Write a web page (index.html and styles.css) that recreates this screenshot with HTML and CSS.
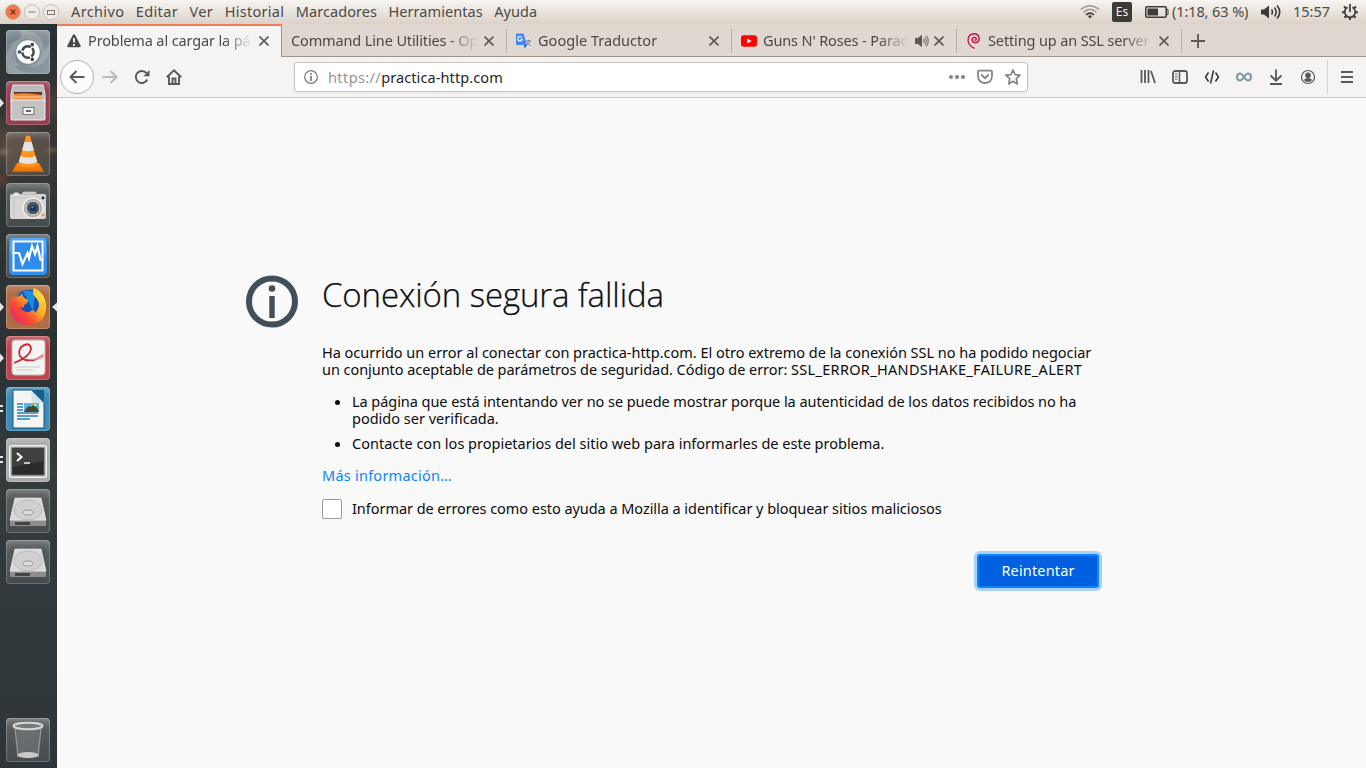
FILE: index.html
```html
<!DOCTYPE html>
<html lang="es">
<head>
<meta charset="utf-8">
<title>Problema al cargar la página</title>
<link rel="stylesheet" href="styles.css">
</head>
<body>
<div class="desktop">
  <header class="panel">
    <div class="window-buttons">
      <svg width="54" height="18" viewBox="0 0 54 18">
        <circle cx="8" cy="8" r="7.4" fill="#f0774a" stroke="#d9a58e"/>
        <path d="M5.7 5.7l4.6 4.6M10.3 5.7l-4.6 4.6" stroke="#5b3020" stroke-width="1.2"/>
        <circle cx="27" cy="8" r="7.6" fill="#efebe7" stroke="#c9c1b9"/>
        <path d="M23.500 8h7" stroke="#7d766f"/>
        <circle cx="46" cy="8" r="7.6" fill="#efebe7" stroke="#c9c1b9"/>
        <rect x="42.500" y="6.500" width="7" height="4" fill="none" stroke="#7d766f"/>
      </svg>
    </div>
    <nav class="menu">
      <span class="m1">Archivo</span><span class="m1">Editar</span><span class="m1">Ver</span><span class="m4">Historial</span><span class="m5">Marcadores</span><span class="m5">Herramientas</span><span class="m5">Ayuda</span>
    </nav>
    <div class="indicators">
      <svg class="i-wifi" width="20" height="16" viewBox="0 0 20 16" fill="none" stroke-width="1.6">
        <path d="M.7 5.5Q10-2 19.3 5.5" stroke="#a39e98"/>
        <path d="M3.500 8.300Q10 2.600 16.500 8.300" stroke="#a39e98"/>
        <path d="M6 11Q10 7.300 14 11" stroke="#3c3b37"/>
        <path d="M8 12.200Q10 10.500 12 12.200L10 14.500Z" fill="#3c3b37" stroke="none"/>
      </svg>
      <span class="i-lang">Es</span>
      <svg class="i-battery" width="24" height="12" viewBox="0 0 24 12">
        <rect x=".8" y=".8" width="20.4" height="10.4" rx="1.2" fill="none" stroke="#3c3b37" stroke-width="1.5"/>
        <rect x="2.5" y="2.5" width="10.5" height="7" fill="#3c3b37"/>
        <path d="M21.5 3.5h1.5v5h-1.5" fill="none" stroke="#3c3b37"/>
      </svg>
      <span class="i-charge">(1:18, 63 %)</span>
      <svg class="i-volume" width="20" height="16" viewBox="0 0 20 16" fill="none" stroke="#3c3b37" stroke-width="1.6">
        <path d="M0 5.500h3l5-4v13l-5-4H0z" fill="#3c3b37" stroke="none"/>
        <path d="M10.500 5.500q2 2.500 0 5M13.500 3.500q3.500 4.500 0 9M16 1.500q5.500 6.500 0 13"/>
      </svg>
      <span class="i-clock">15:57</span>
      <svg class="i-power" width="16" height="16" viewBox="0 0 16 16" fill="none" stroke="#3c3b37" stroke-width="1.7">
        <path d="M5.600 3.300A5.300 5.300 0 1 0 10.400 3.300M8 0v8"/>
        <path d="M3.800 4.200L2 2.400M12.200 4.200L14 2.400M2.700 8.200H0M13.300 8.200H16M4.200 12L2.400 13.800M11.800 12l1.800 1.800M8 13.500V16" stroke-width="2"/>
      </svg>
    </div>
  </header>

  <div class="workspace">
    <aside class="launcher">
      <div class="tile t-dash"><svg viewBox="0 0 44 44">
        <path d="M0 30Q3 5 28 7Q14 6 9 22Q8 32 15 37Q3 36 0 30M15 0Q42 2 36 24Q33 8 15 9M44 14Q43 42 16 36Q33 38 36 22M3 44Q-1 35 4 27Q8 43 27 43" fill="#fff" opacity=".17"/>
        <circle cx="22" cy="22" r="11.700" fill="#fff"/>
        <circle cx="22" cy="22" r="5.700" fill="none" stroke="#3e474b" stroke-width="2.500" stroke-dasharray="10.400 1.537" stroke-dashoffset="5.200"/>
        <circle cx="13.400" cy="22" r="1.800" fill="#3e474b"/><circle cx="26.300" cy="14.600" r="1.800" fill="#3e474b"/><circle cx="26.300" cy="29.400" r="1.800" fill="#3e474b"/>
      </svg></div>
      <div class="tile t-files"><svg viewBox="0 0 44 44">
        <path d="M7 4h30l2 9v8H5v-8z" fill="#bbb" stroke="#e8e8e8"/>
        <path d="M8 11h28v9H8z" fill="#553a2b"/><path d="M8 13q12-2 28 1v6H8z" fill="#ef8a3c"/><path d="M8 16h28" stroke="#ffd09a"/>
        <rect x="5" y="19" width="34" height="20" rx="1" fill="#c3c3c3" stroke="#eee"/>
        <rect x="17" y="26.500" width="11" height="7" fill="#f4f4f4" stroke="#777"/><path d="M20 30h5" stroke="#555" stroke-width="1.800"/>
      </svg></div>
      <div class="tile t-vlc"><svg viewBox="0 0 44 44">
        <path d="M11 31h22l5 9H6z" fill="#f07c0c"/><path d="M20 4q2-1 4 0l8 29q-10 5-20 0z" fill="#ff941f"/>
        <path d="M18.400 10h7.200l2.200 8q-5.800 2.500-11.600 0zM14.500 24q7.500 3 15 0l1.700 6q-9.200 4-18.400 0z" fill="#e4e4e4"/>
        <path d="M6 39.300h32" stroke="#cf5e00" stroke-width="1.500"/>
      </svg></div>
      <div class="tile t-dark"><svg viewBox="0 0 44 44">
        <rect x="4" y="11" width="36" height="25" rx="2" fill="#d7d7d7"/><path d="M6 12q4-5 9 0M16 11h14v-2H17" fill="#eee" stroke="#aaa"/>
        <path d="M4 15h36M8 15v20" stroke="#c3c3c3"/><circle cx="27" cy="25" r="10" fill="#aaa" stroke="#eee" stroke-width="1.500"/>
        <circle cx="27" cy="25" r="6.800" fill="#555" stroke="#ddd"/><rect x="23.500" y="22" width="7" height="6" rx="1.500" fill="#15386d"/><path d="M25 24h3" stroke="#6ba3df"/>
        <circle cx="37" cy="15" r="1.400" fill="#222"/><circle cx="37" cy="32" r="1.500" fill="#ea9c30"/>
      </svg></div>
      <div class="tile t-dark"><svg viewBox="0 0 44 44">
        <rect x="3" y="3" width="38" height="38" rx="4" fill="#2f8fee"/><rect x="4" y="4" width="36" height="17" rx="3" fill="#4ea7f7"/>
        <rect x="7.500" y="7.500" width="29" height="29" fill="#2f8ceb" stroke="#fff" stroke-width="2"/>
        <path d="M8 19h5l3.500 11 5-11 1.500 5 3-12 3 8 2.500-8 3 14h3" fill="none" stroke="#fff" stroke-width="2.200"/>
      </svg></div>
      <div class="tile t-firefox"><svg viewBox="0 0 44 44">
        <defs><linearGradient id="fx" x1="1" y1="0" x2="0" y2="1"><stop offset="0" stop-color="#fff04a"/><stop offset=".38" stop-color="#ffb625"/><stop offset=".65" stop-color="#fb4b35"/><stop offset="1" stop-color="#e31587"/></linearGradient></defs>
        <circle cx="23" cy="20" r="15" fill="#1775db"/><path d="M13 8q9-6 17-1l4 19-18 8z" fill="#1652b5"/><path d="M17 6q8-2 12 3l-2 17" fill="#168fe0"/>
        <path d="M28 3Q41 9 40 24Q38 40 22 40Q5 39 4 22Q4 15 8 10L8 14Q10 11 14 11L16 8Q16 13 22 15Q22 18 18 20Q19 24 14 22Q17 28 23 27Q29 23 29 28Q36 21 31 14Q25 9 28 3Z" fill="url(#fx)"/>
      </svg></div>
      <div class="tile t-evince"><svg viewBox="0 0 44 44">
        <rect x="6" y="4" width="33" height="35" rx="3" fill="#f3f3f3" stroke="#c7b4b4"/>
        <path d="M8 27Q25 20 25 12Q23 5 15 11Q10 20 19 24Q29 26 37 19" fill="none" stroke="#cc2930" stroke-width="1.800"/>
        <path d="M19 24Q29 25 37.500 18V22Q28 25 19 24" fill="#ee9b99"/>
        <path d="M10 31h24M10 34h17" stroke="#ccc"/>
      </svg></div>
      <div class="tile t-writer"><svg viewBox="0 0 44 44">
        <path d="M25 3h13v13z" fill="#14608f"/><path d="M7 3h18l13 13v25H7z" fill="#f4f4f4" stroke="#1e5273"/><path d="M25 3l1 13 12 0z" fill="#d8e4ea"/>
        <path d="M11 17h6M11 20h6M11 23h6M11 26h21M11 29h21M11 32h13" stroke="#2881b6" stroke-width="1.700"/>
        <rect x="18" y="16" width="15" height="9" fill="#60b5ee"/><path d="M18 25q4-8 7-5 4-5 8 5z" fill="#474b28"/><circle cx="29" cy="18" r="1.200" fill="#ffe84d"/>
      </svg></div>
      <div class="tile t-term"><svg viewBox="0 0 44 44">
        <rect x="3.500" y="7.500" width="37" height="32" rx="1" fill="#cacaca" stroke="#f2f2f2"/><rect x="6" y="10" width="32" height="27" fill="#292c29" stroke="#555"/><path d="M7 11h30v12L7 29z" fill="#555" opacity=".5"/>
        <path d="M11 15l4.500 4-4.500 4" fill="none" stroke="#fff" stroke-width="2"/><path d="M18 25h6" stroke="#fff" stroke-width="1.400"/>
      </svg></div>
      <div class="tile t-dark"><svg viewBox="0 0 44 44">
        <path d="M9 9h26l5 22v6H4v-6z" fill="#aaa"/><path d="M9 9h26l5 22H4z" fill="#d8d8d8" stroke="#eee" stroke-width=".6"/><ellipse cx="22" cy="21" rx="14" ry="10" fill="#d0d0d0" stroke="#aaa" stroke-width=".6"/><ellipse cx="22" cy="23.500" rx="5" ry="2.500" fill="#ddd" stroke="#999"/><path d="M4 32h36v5H4z" fill="#8d8d8d"/><path d="M9 33h15v3H9z" fill="#444"/>
      </svg></div>
      <div class="tile t-dark"><svg viewBox="0 0 44 44">
        <path d="M9 9h26l5 22v6H4v-6z" fill="#aaa"/><path d="M9 9h26l5 22H4z" fill="#d8d8d8" stroke="#eee" stroke-width=".6"/><ellipse cx="22" cy="21" rx="14" ry="10" fill="#d0d0d0" stroke="#aaa" stroke-width=".6"/><ellipse cx="22" cy="23.500" rx="5" ry="2.500" fill="#ddd" stroke="#999"/><path d="M4 32h36v5H4z" fill="#8d8d8d"/><path d="M9 33h15v3H9z" fill="#444"/>
      </svg></div>
      <div class="tile t-dark t-trash"><svg viewBox="0 0 44 44">
        <path d="M8 8h28l-3 31q-11 3-22 0z" fill="#7d8184" opacity=".5"/><ellipse cx="22" cy="37" rx="11" ry="3" fill="#c9cac8"/><path d="M9 10l3 27M35 10l-3 27" stroke="#aaa" stroke-width=".8"/><ellipse cx="22" cy="8" rx="14.500" ry="3.200" fill="#777a7a" stroke="#d6d6d2" stroke-width="2"/>
      </svg></div>
      <svg class="pips" width="57" height="744" viewBox="0 24 57 744" fill="#e5e5e5">
        <path d="M0 98.500l4 4.500-4 4.500zM0 302.500l4 4.500-4 4.500zM57 302.500l-5 4.500 5 4.500zM0 353.500l4 4.500-4 4.500zM0 405h3v2H0zM0 410h3v2H0zM0 456h3v2H0zM0 461h3v2H0z"/>
      </svg>
    </aside>

    <div class="browser">
      <div class="tabs">
        <div class="tab active">
          <svg class="fav" width="16" height="16" viewBox="0 0 16 16"><path d="M8 2.500L13.500 13h-11z" fill="#4a4846" stroke="#4a4846" stroke-width="2.500" stroke-linejoin="round"/><path d="M8 5v4.500M8 11v2" stroke="#fff" stroke-width="1.700"/></svg>
          <span class="title">Problema al cargar la pá</span>
          <svg class="close" width="10" height="10"><path d="M.5.5l9 9M9.500.5l-9 9"/></svg>
        </div>
        <div class="tab">
          <span class="title">Command Line Utilities - Op</span>
          <svg class="close" width="10" height="10"><path d="M.5.5l9 9M9.500.5l-9 9"/></svg>
        </div>
        <div class="tab">
          <svg class="fav" width="16" height="16" viewBox="0 0 16 16"><path d="M6 4h9.500v11.500H9z" fill="#dedfe1"/><path d="M0 .5h7.500L11 12H1q-1 0-1-1z" fill="#4a88f1"/><path d="M8 12h3l-2.500 3.500z" fill="#2951ba"/><path d="M6 4.500A2.300 2.300 0 1 0 6.300 6.300H4.500" fill="none" stroke="#fff" stroke-width="1.100"/><path d="M10 8h5M12.500 6.500V8M14.200 8q-1 3-3.500 4M11 9q1 2 4 4" fill="none" stroke="#6f8591"/></svg>
          <span class="title wide">Google Traductor</span>
          <svg class="close" width="10" height="10"><path d="M.5.5l9 9M9.500.5l-9 9"/></svg>
        </div>
        <div class="tab">
          <svg class="fav" width="16" height="16" viewBox="0 0 16 16"><rect y="2.300" width="16" height="11.500" rx="2.800" fill="#f00"/><path d="M6.300 5.500v5l4.400-2.500z" fill="#fff"/></svg>
          <span class="title">Guns N' Roses - Parad</span>
          <svg class="sound" width="14" height="12" viewBox="0 0 14 12" fill="none" stroke="#5b5856"><path d="M.5 3.500H3L6.500.5v11L3 8.500H.5z" fill="#5b5856"/><path d="M8.500 4q1.500 2 0 4M10 2q3 4 0 8M11.500.5q3.500 5.500 0 11" stroke-width=".9"/></svg>
          <svg class="close" width="10" height="10"><path d="M.5.5l9 9M9.500.5l-9 9"/></svg>
        </div>
        <div class="tab">
          <svg class="fav" width="16" height="16" viewBox="0 0 16 16" fill="none" stroke="#c70f4c" stroke-width="1.400"><path d="M8.500 15.500Q2.500 12.500 2 7.500Q2 1.500 7.500.8Q12.500.7 13.200 5Q13.400 9 9.500 9.800Q5.700 9.500 6 6.200Q7.300 3.400 9.800 4.800Q11 7.300 8.500 7.200"/></svg>
          <span class="title">Setting up an SSL server</span>
          <svg class="close" width="10" height="10"><path d="M.5.5l9 9M9.500.5l-9 9"/></svg>
        </div>
        <div class="newtab"><svg width="14" height="14"><path d="M7 0v14M0 7h14" stroke="#5b5856" stroke-width="1.800"/></svg></div>
      </div>

      <div class="toolbar">
        <div class="back"><svg width="16" height="14" viewBox="0 0 16 14"><path d="M15.500 7H1.500M7.500 1l-6 6 6 6"/></svg></div>
        <svg class="ic forward" width="16" height="14" viewBox="0 0 16 14"><path d="M.5 7h14M8.500 1l6 6-6 6"/></svg>
        <svg class="ic reload" width="16" height="16" viewBox="0 0 16 16"><path d="M13.300 10.500A6 6 0 1 1 12.500 4.200"/><path d="M15.500 1v6.200H9.300z"/></svg>
        <svg class="ic home" width="16" height="16" viewBox="0 0 16 16"><path d="M.8 8.300L8 1.300l7.200 7M3 7.500V15h10V7.500"/><path d="M6.500 15V9.500h3V15"/></svg>
        <div class="urlbar">
          <svg class="info" width="14" height="14" viewBox="0 0 14 14"><circle cx="7" cy="7" r="6.300" fill="none" stroke="#7c7b7a" stroke-width="1.200"/><path d="M7 6v5M7 3v1.700" stroke="#7c7b7a" stroke-width="1.700"/></svg>
          <span class="url"><span class="scheme">https://</span>practica-http.com</span>
          <span class="urltools">
            <svg width="16" height="16" viewBox="0 0 16 16" fill="#858483"><circle cx="2" cy="8" r="2"/><circle cx="8" cy="8" r="2"/><circle cx="14" cy="8" r="2"/></svg>
            <svg width="16" height="16" viewBox="0 0 16 16" fill="none" stroke="#858483" stroke-width="1.800"><path d="M2 1.700h12q1 0 1 1V7q-.5 7-7 7T1 7V2.700q0-1 1-1z"/><path d="M4.700 6L8 9.200 11.300 6" stroke-linecap="round"/></svg>
            <svg width="16" height="16" viewBox="0 0 16 16" fill="none" stroke="#858483" stroke-width="1.700" stroke-linejoin="round"><path d="M8 1l2.100 4.700 5 .5-3.800 3.500 1 5.200L8 12.300l-4.300 2.600 1-5.200L.9 6.200l5-.5z"/></svg>
          </span>
        </div>
        <div class="tools">
          <svg width="16" height="16" viewBox="0 0 16 16"><path d="M1.500 1v13M5 1v13M8.500 1v13M11 2l4 12"/></svg>
          <svg width="16" height="16" viewBox="0 0 16 16"><rect x="1" y="2" width="14" height="12" rx="2"/><path d="M7.500 2v12" stroke-width="1.500"/><path d="M3 5h2.500M3 7.500h2.500M3 10h2.500" stroke-width="1.100"/></svg>
          <svg width="16" height="16" viewBox="0 0 16 16" class="code"><path d="M4.500 3.500L1.500 8l3 4.500M11.500 3.500l3 4.500-3 4.500M9.500 1.500l-3 13"/></svg>
          <svg width="16" height="16" viewBox="0 0 16 16" class="loop"><path d="M8 8Q5.500 4.300 3.800 4.500Q1 4.800 1 8Q1 11.200 3.800 11.500Q5.500 11.700 8 8Q10.500 4.300 12.200 4.500Q15 4.800 15 8Q15 11.200 12.200 11.500Q10.500 11.700 8 8"/></svg>
          <svg width="16" height="16" viewBox="0 0 16 16"><path d="M8 .5v11M2.500 6.500L8 11.700l5.500-5.200M2 15h12"/></svg>
          <svg width="16" height="16" viewBox="0 0 16 16"><circle cx="8" cy="8" r="6.500" stroke-width="1.200"/><circle cx="8" cy="6.200" r="2.800" fill="#5b5856" stroke="none"/><path d="M3.800 11q1.500-2 4.200-2t4.200 2q-1.700 2-4.200 2t-4.200-2z" fill="#5b5856" stroke="none"/></svg>
        </div>
        <div class="hamburger"><svg width="12" height="12"><path d="M0 1h12M0 6h12M0 11h12" stroke="#5b5856" stroke-width="1.800"/></svg></div>
      </div>

      <main class="page">
        <svg class="bigicon" width="52" height="54" viewBox="0 0 52 54"><circle cx="26" cy="26.500" r="23" fill="none" stroke="#424e5a" stroke-width="6"/><circle cx="26" cy="13.500" r="3.300" fill="#424e5a"/><path d="M23.300 21h5.400v22h-5.400z" fill="#424e5a"/></svg>
        <div class="error">
          <h1>Conexión segura fallida</h1>
          <p class="desc">Ha ocurrido un error al conectar con practica-http.com. El otro extremo de la conexión SSL no ha podido negociar<br><span class="params">un conjunto aceptable de parámetros de seguridad. Código de error: </span><span class="errcode">SSL_ERROR_HANDSHAKE_FAILURE_ALERT</span></p>
          <ul>
            <li><span class="tight">La página que está intentando ver no se puede mostrar porque la autenticidad de los datos recibidos no ha</span><br>podido ser verificada.</li>
            <li>Contacte con los propietarios del sitio web para informarles de este problema.</li>
          </ul>
          <a class="more">Más información…</a>
          <div class="report"><span class="box"></span><span class="tight">Informar de errores como esto ayuda a Mozilla a identificar y bloquear sitios maliciosos</span></div>
          <div class="actions"><button class="retry">Reintentar</button></div>
        </div>
      </main>
    </div>
  </div>
</div>
</body>
</html>
```

FILE: styles.css
```css
* { box-sizing: border-box; }
body { margin: 0; font-family: "Noto Sans", "Open Sans", sans-serif; font-size: 14.5px; color: #0c0c0d; }
svg { display: block; flex: none; }
.desktop { width: 1366px; height: 768px; display: flex; flex-direction: column; overflow: hidden; }

/* Top panel */
.panel { height: 24px; display: flex; align-items: center; background: linear-gradient(#f7f5f2, #e9e3dd 50%, #dbd1c9); color: #4c4a46; white-space: nowrap; line-height: 20px; padding-bottom: 1px; }
.window-buttons { width: 71px; padding: 2px 0 0 5px; }
.menu { display: flex; gap: 11.5px; flex: 1; padding-bottom: 1px; }
.m1 { letter-spacing: .36px; }
.m4 { letter-spacing: .28px; }
.m5 { letter-spacing: .06px; }
.indicators { display: flex; align-items: center; }
.i-wifi { margin-right: 12px; }
.i-lang { width: 20px; height: 20px; margin-right: 13px; border-radius: 2px; background: #3c3b37; color: #f2efeb; font-size: 12px; line-height: 20px; text-align: center; }
.i-battery { margin-right: 3px; }
.i-charge { width: 76px; margin-right: 13px; padding-bottom: 1px; letter-spacing: -.1px; }
.i-volume { margin-right: 12px; }
.i-clock { width: 37px; margin-right: 12px; padding-bottom: 1px; }
.i-power { margin-right: 8px; }

/* Launcher */
.workspace { flex: 1; display: flex; min-height: 0; }
.launcher { position: relative; width: 57px; padding: 6px 0 6px 6px; display: flex; flex-direction: column; gap: 7px;
  background:
    radial-gradient(ellipse 9px 5px at 4px 128px, #b39b7e66, transparent),
    radial-gradient(ellipse 10px 4px at 52px 126px, #a0886466, transparent),
    radial-gradient(ellipse 40px 34px at 10px 122px, #6b5544aa, transparent),
    radial-gradient(ellipse 30px 24px at 50px 80px, #4f463daa, transparent),
    radial-gradient(ellipse 10px 9px at 2px 156px, #8a4a2c66, transparent),
    radial-gradient(ellipse 30px 20px at 30px 226px, #4f4f4a66, transparent),
    linear-gradient(#273032, #3a3734 130px, #303536 180px, #2a3234 330px, #353b3c 460px, #31393c 560px, #2d3538); }
.tile { width: 44px; height: 44px; border-radius: 4px; flex: none; box-shadow: inset 0 0 0 1px #ffffff33, inset 0 7px 8px -5px #ffffff55; }
.t-dash { background: linear-gradient(135deg, #738087, #8b9aa1); }
.t-files { background: #963d4f; }
.t-vlc { background: #6b5f5788; }
.t-dark { background: linear-gradient(#5b6061, #454b4d); }
.t-firefox { background: #af6c45; }
.t-evince { background: #bf434b; }
.t-writer { background: #398bb9; }
.t-term { background: #a9a9a9; }
.t-trash { margin-top: auto; }
.pips { position: absolute; left: 0; top: 0; }

/* Tab strip */
.browser { flex: 1; display: flex; flex-direction: column; min-width: 0; background: #f9f9fa; }
.tabs { height: 33px; display: flex; background: #dfd7d0; color: #4b4947; border-bottom: 1px solid #9c938d; line-height: 20px; }
.tab { position: relative; width: 225px; height: 32px; display: flex; align-items: center; padding: 1px 13px 0 9px; }
.tab::after { content: ""; position: absolute; right: 0; top: 5px; width: 1px; height: 24px; background: #b5aca6; }
.tab.active { height: 33px; background: #f5f4f2; border-top: 2px solid #ee7d52; border-right: 1px solid #9c938d; padding: 0 12px 1px 9px; }
.tab.active::after { display: none; }
.fav { margin-right: 6px; }
.title { flex: 1; white-space: nowrap; min-width: 0; margin-right: 4px; padding-bottom: 2px; letter-spacing: -.13px; -webkit-mask-image: linear-gradient(to left, transparent 2px, #000 32px); mask-image: linear-gradient(to left, transparent 2px, #000 32px); }
.title.wide { letter-spacing: .03px; }
.sound { margin-right: 5px; }
.close path { stroke: #5b5856; stroke-width: 1.6; }
.newtab { padding: 10px 0 0 9px; }

/* Navigation toolbar */
.toolbar { height: 41px; display: flex; align-items: center; background: #f5f4f2; border-bottom: 1px solid #c5c4c2; }
.back { width: 34px; height: 34px; margin-left: 3px; border: 1px solid #b2b1b0; border-radius: 50%; background: #fcfcfc; display: flex; align-items: center; justify-content: center; }
.back path, .ic path { fill: none; stroke: #5b5856; stroke-width: 1.9; }
.forward { margin-left: 8px; }
.ic.forward path { stroke: #bab9b7; }
.reload { margin-left: 16px; }
.ic.reload path:last-child { fill: #5b5856; stroke: none; }
.home { margin-left: 16px; }
.urlbar { width: 734px; height: 30px; margin-left: 112px; display: flex; align-items: center; padding: 0 6px 0 9px; border: 1px solid #c4c3c1; border-radius: 3px; background: #fff; box-shadow: 0 1px 3px #0000000d; }
.url { flex: 1; margin-left: 10px; color: #252525; letter-spacing: .1px; }
.scheme { color: #949494; letter-spacing: .4px; }
.urltools { display: flex; gap: 12px; }
.tools { display: flex; gap: 16px; margin-left: 112px; }
.tools svg { fill: none; stroke: #5b5856; stroke-width: 1.8; }
.tools .code { stroke: #2c2b2a; stroke-width: 1.4; }
.tools .loop { stroke: #7d97a3; stroke-width: 2; }
.hamburger { height: 34px; margin-left: 11px; padding: 11px 0 0 13px; border-left: 1px solid #d2d1cf; }

/* Error page */
.page { flex: 1; display: flex; padding: 177px 0 0 189px; }
.bigicon { margin-right: 24px; }
.error { width: 779px; white-space: nowrap; line-height: 17px; }
h1 { margin: 0; font-family: "Open Sans", "Noto Sans", sans-serif; font-weight: 300; font-size: 33px; line-height: 40px; letter-spacing: -.12px; -webkit-text-stroke: .25px #0c0c0d; }
.desc { margin: 29px 0 0; letter-spacing: -.015px; }
.params { letter-spacing: -.05px; }
.errcode { letter-spacing: .31px; }
.tight { letter-spacing: -.05px; }
ul { margin: 15px 0 0; padding-left: 30px; }
li { margin-bottom: 8px; }
.more { display: block; margin-top: 15px; color: #0a84ff; letter-spacing: .24px; }
.report { display: flex; align-items: center; margin-top: 15px; }
.report .tight { padding-bottom: 1px; }
.box { width: 20px; height: 20px; margin-right: 10px; border: 1px solid #9a9a9b; border-radius: 2px; background: #fff; }
.actions { display: flex; justify-content: flex-end; margin-top: 35px; padding-right: 2px; }
.retry { width: 122px; height: 34px; padding: 0 0 2px; border: 2px solid #0a84ff; border-radius: 3px; background: #0060df; color: #fff; font: inherit; letter-spacing: .15px; box-shadow: 0 0 0 3px #a9d2fb; }
```
